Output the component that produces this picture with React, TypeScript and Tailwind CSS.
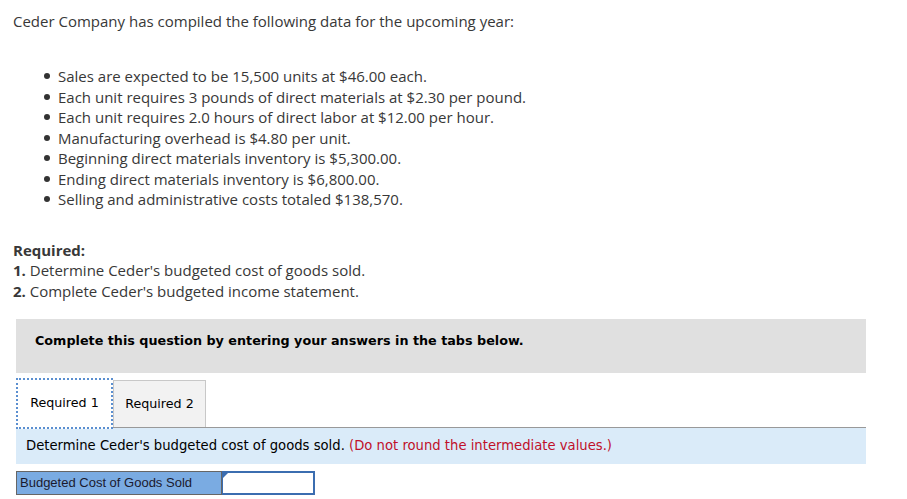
const facts = [
  "Sales are expected to be 15,500 units at $46.00 each.",
  "Each unit requires 3 pounds of direct materials at $2.30 per pound.",
  "Each unit requires 2.0 hours of direct labor at $12.00 per hour.",
  "Manufacturing overhead is $4.80 per unit.",
  "Beginning direct materials inventory is $5,300.00.",
  "Ending direct materials inventory is $6,800.00.",
  "Selling and administrative costs totaled $138,570.",
];

export default function App() {
  return (
    <div className="h-[499px] w-[907px] overflow-hidden bg-white text-[#383838]">
      {/* Question text */}
      <div className="pl-[13px] pt-[11px] font-['Open_Sans',sans-serif] text-[15px]">
        <p className="leading-[20px]">
          Ceder Company has compiled the following data for the upcoming year:
        </p>
        <ul className="mt-[35px] pl-[31px] leading-[20.5px]">
          {facts.map((f) => (
            <li key={f} className="flex items-center">
              <span className="mr-[8px] inline-block h-[6px] w-[6px] rounded-full bg-[#333]" />
              {f}
            </li>
          ))}
        </ul>
        <div className="mt-[30px] leading-[20.5px]">
          <p className="font-bold">Required:</p>
          <p>
            <span className="font-bold">1.</span> Determine Ceder's budgeted cost of goods sold.
          </p>
          <p>
            <span className="font-bold">2.</span> Complete Ceder's budgeted income statement.
          </p>
        </div>
      </div>

      {/* Answer area */}
      <div className="ml-4 mt-[17.5px] w-[850px] font-['DejaVu_Sans',sans-serif] text-[12.7px] text-black">
        <div className="flex h-[54px] items-center bg-[#e0e0e0] pb-[9px] pl-[19px] text-[12.75px] font-bold">
          Complete this question by entering your answers in the tabs below.
        </div>

        <div className="mt-[5px] flex items-end border-b border-[#999]">
          <div className="-mb-[2px] flex h-[51px] w-[97px] items-center justify-center border-2 border-dotted border-[#5b8fd0] bg-white">
            Required 1
          </div>
          <div className="flex h-[47px] w-[93px] items-center justify-center border border-b-0 border-[#c8c8c8] bg-[#f2f2f2]">
            Required 2
          </div>
        </div>

        <div className="flex h-[36px] items-center bg-[#daebf9] pl-[10px] text-[13.2px]">
          Determine Ceder's budgeted cost of goods sold.&nbsp;
          <span className="text-[#c0102a]">(Do not round the intermediate values.)</span>
        </div>

        <div className="mt-[7px] flex h-[24px]">
          <div className="flex w-[206px] items-center border border-[#666] bg-[#7aabe2] pl-[3px] font-['Liberation_Sans',sans-serif] text-[13px] text-[#1a1a2e]">
            Budgeted Cost of Goods Sold
          </div>
          <div className="relative w-[93px] border-2 border-l border-[#3b6db0] bg-white">
            <span className="absolute left-0 top-0 h-0 w-0 border-l-[5px] border-t-[5px] border-l-transparent border-t-[#3b6db0] [transform:scaleX(-1)]" />
          </div>
        </div>
      </div>
    </div>
  );
}
